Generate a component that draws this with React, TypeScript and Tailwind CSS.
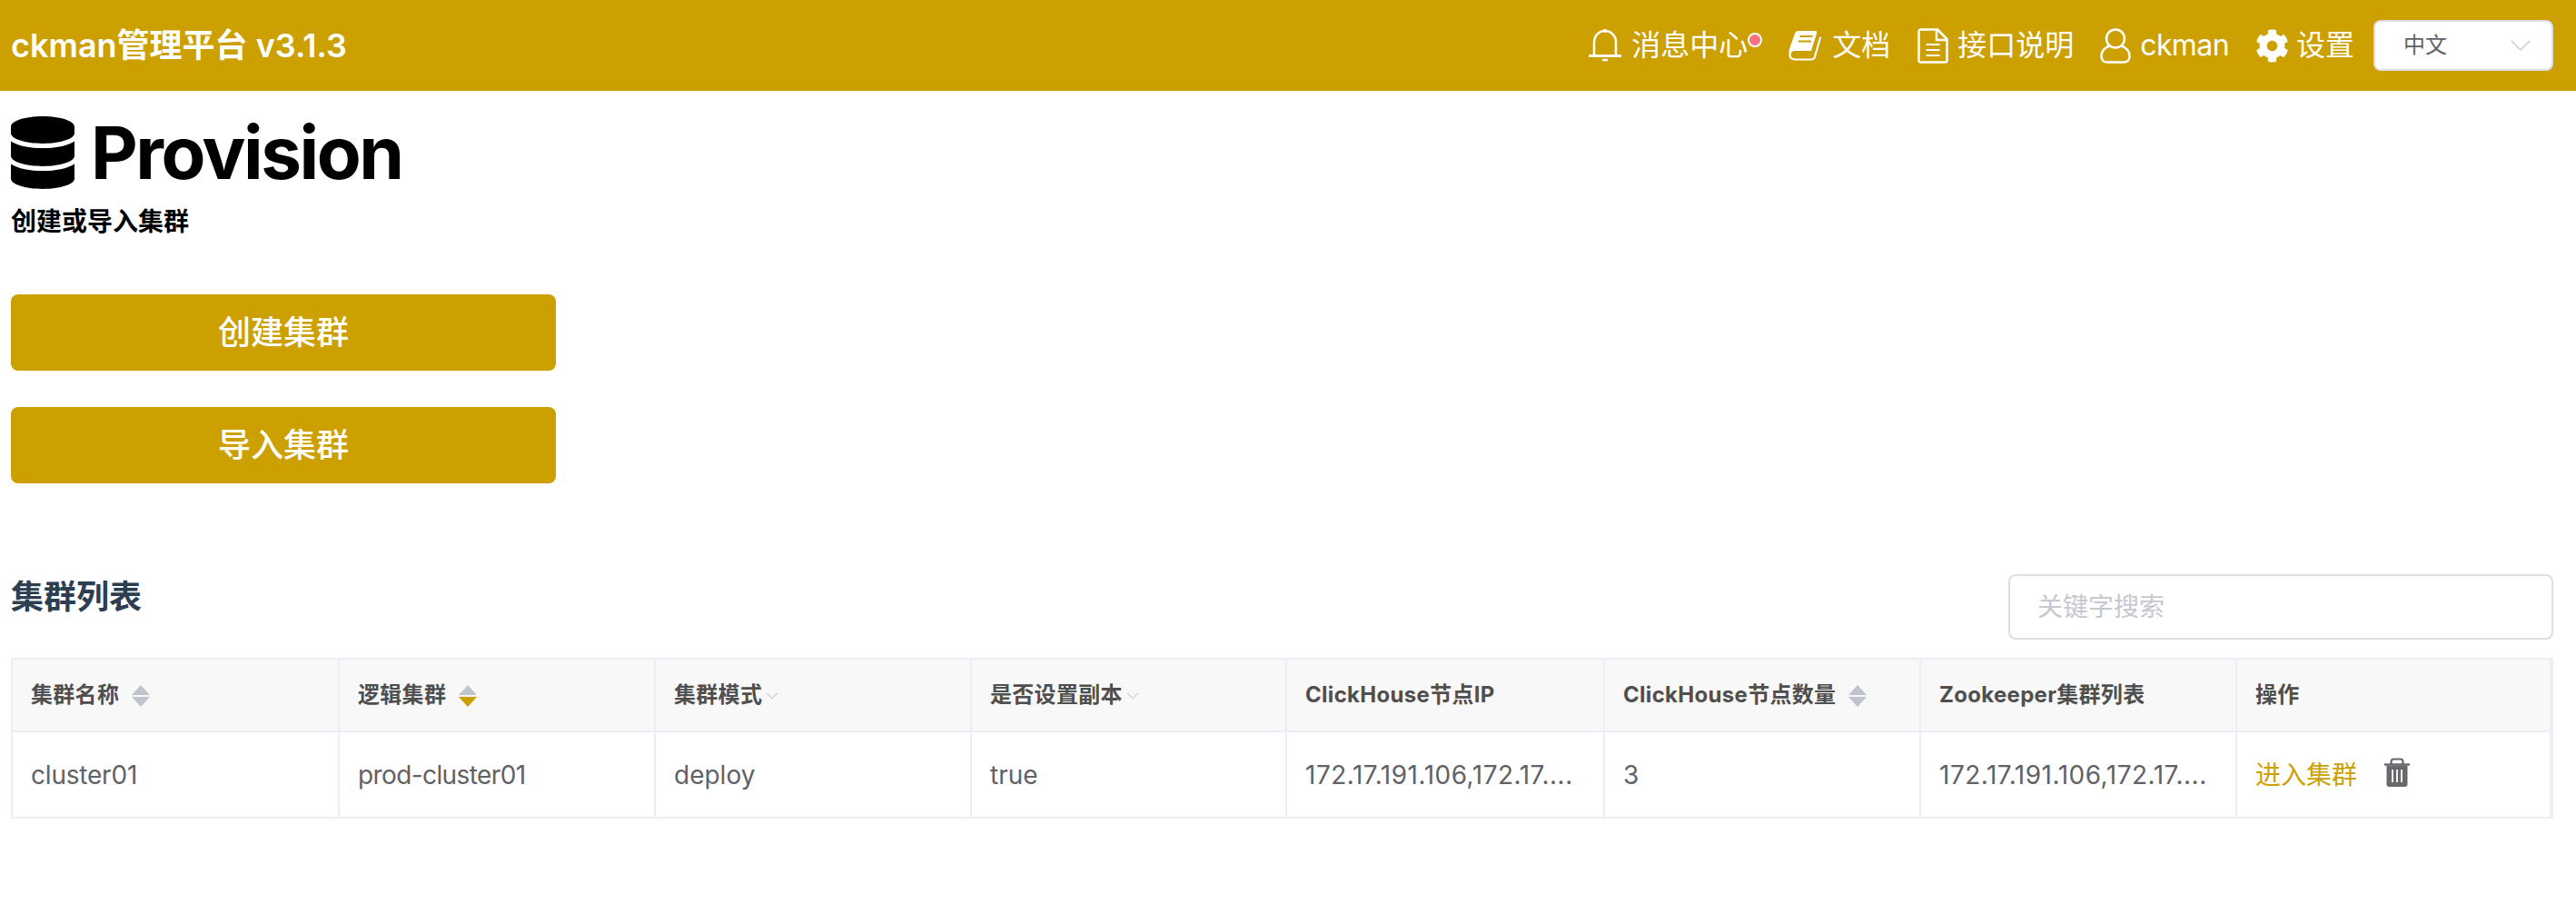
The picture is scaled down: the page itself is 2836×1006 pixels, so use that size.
import type { ReactNode } from 'react';
import { ChevronDown } from 'lucide-react';
import { FaCog, FaDatabase } from 'react-icons/fa';

const font = "font-['Inter','Noto_Sans_CJK_SC',sans-serif]";

const SortIcon = ({ active = false }: { active?: boolean }) => (
  <span className="inline-flex flex-col gap-[2px] ml-[14px] align-middle">
    <span className="w-0 h-0 border-x-[10px] border-x-transparent border-b-[11px] border-b-[#c0c4cc]" />
    <span className={`w-0 h-0 border-x-[10px] border-x-transparent border-t-[11px] ${active ? 'border-t-[#cca000]' : 'border-t-[#c0c4cc]'}`} />
  </span>
);

const FilterIcon = () => <ChevronDown className="inline-block w-[22px] h-[22px] text-[#a8acb4]" strokeWidth={1} />;

const BellIcon = () => (
  <svg viewBox="0 0 36 36" className="w-[36px] h-[36px]" fill="none" stroke="currentColor" strokeWidth="2.5">
    <path d="M6 29V14a12 12 0 0 1 24 0v15" />
    <path d="M1 29.5h34" strokeLinecap="round" strokeWidth="3" />
    <path d="M18 0.5v2" strokeWidth="3" strokeLinecap="round" />
    <path d="M16 34h4" strokeWidth="2.5" strokeLinecap="round" />
  </svg>
);

const BookIcon = () => (
  <svg viewBox="0 0 37 34" className="w-[37px] h-[34px]" fill="none">
    <path d="M10 1h19q3 0 2 3l-6 19H7q-3 0-5 3l-1 1q-1-3 0-6L7 4q1-3 3-3z" fill="currentColor" />
    <path d="M2 25q-2 7 5 7.500h18q3 0 4-3l6-21" stroke="currentColor" strokeWidth="2.200" strokeLinecap="round" />
    <path d="M12.500 7h14M11 12.500h14" stroke="#cca000" strokeWidth="2.200" />
  </svg>
);

const FileIcon = () => (
  <svg viewBox="0 0 34 39" className="w-[34px] h-[39px]" fill="none" stroke="currentColor" strokeWidth="2.500" strokeLinejoin="round">
    <path d="M4 1.500h18L32.500 12v23.500a2 2 0 0 1-2 2H4a2 2 0 0 1-2.500-2V3.500a2 2 0 0 1 2.500-2z" />
    <path d="M21 2v11h11" />
    <path d="M9.500 18h15M9.500 24h15M9.500 30h15" strokeWidth="2.200" />
  </svg>
);

const UserIcon = () => (
  <svg viewBox="0 0 34 39" className="w-[34px] h-[39px]" fill="none" stroke="currentColor" strokeWidth="2.500">
    <circle cx="17" cy="11.500" r="10" />
    <path d="M10.500 19.500C5 21.500 1.500 26 1.500 31c0 4 2.500 6.500 6.500 6.500h18c4 0 6.500-2.500 6.500-6.500 0-5-3.500-9.500-9-11.500" />
  </svg>
);

const TrashIcon = () => (
  <svg viewBox="0 0 28 32" className="w-[28px] h-[32px] text-[#67686c]" fill="none">
    <path d="M7.500 7V4.500A3 3 0 0 1 10.500 1.500h7a3 3 0 0 1 3 3V7" stroke="currentColor" strokeWidth="2.200" />
    <path d="M0 7.500h28" stroke="currentColor" strokeWidth="2.400" />
    <path d="M2.500 8.500h23V29a3 3 0 0 1-3 3h-17a3 3 0 0 1-3-3z" fill="currentColor" />
    <path d="M9 13v14M14 13v14M19 13v14" stroke="#fff" strokeWidth="1.800" />
  </svg>
);

const headers: { label: string; extra?: ReactNode }[] = [
  { label: '集群名称', extra: <SortIcon /> },
  { label: '逻辑集群', extra: <SortIcon active /> },
  { label: '集群模式', extra: <FilterIcon /> },
  { label: '是否设置副本', extra: <FilterIcon /> },
  { label: 'ClickHouse节点IP' },
  { label: 'ClickHouse节点数量', extra: <SortIcon /> },
  { label: 'Zookeeper集群列表' },
  { label: '操作' },
];

const cellClass = 'border-2 border-[#ebeef5] px-[20px] text-[#606266] whitespace-nowrap';
const ipText = '172.17.191.106,172.17....';

export default function App() {
  return (
    <div className={`${font} min-h-[1006px] bg-white`}>
      <header className="h-[100px] bg-[#cca000] flex items-center justify-between pl-[12px] pr-[25px] text-white">
        <div className="text-[36px] font-semibold">ckman管理平台 v3.1.3</div>
        <div className="flex items-center text-[32px]">
          <div className="flex items-center gap-[11px]">
            <BellIcon />
            <span>消息中心</span>
          </div>
          <span className="w-[16px] h-[16px] rounded-full bg-[#f9707f] border-2 border-white -mt-[13px]" />
          <div className="flex items-center gap-[11px] ml-[29px]">
            <BookIcon />
            <span>文档</span>
          </div>
          <div className="flex items-center gap-[10px] ml-[30px]">
            <FileIcon />
            <span>接口说明</span>
          </div>
          <div className="flex items-center gap-[10px] ml-[29px]">
            <UserIcon />
            <span className="tracking-[-0.6px]">ckman</span>
          </div>
          <div className="flex items-center gap-[8px] ml-[29px]">
            <FaCog className="w-[37px] h-[37px]" />
            <span>设置</span>
          </div>
          <div className="w-[198px] h-[56px] ml-[21px] rounded-[8px] bg-white border-2 border-[#dcdee2] flex items-center justify-between pl-[31px] pr-[14px] text-[24px] text-[#606266]">
            <span>中文</span>
            <ChevronDown className="w-[40px] h-[40px] text-[#c5c8ce]" strokeWidth={0.8} />
          </div>
        </div>
      </header>

      <main className="px-[12px]">
        <div className="flex items-center gap-[18px] pt-[28px] text-black">
          <FaDatabase className="w-[70px] h-[80px]" />
          <h1 className="text-[80px] leading-[80px] font-bold tracking-[-2.5px]">Provision</h1>
        </div>
        <p className="mt-[20px] text-[28px] leading-[32px] font-semibold text-black">创建或导入集群</p>

        <div className="mt-[64px] w-[600px] flex flex-col gap-[40px]">
          <button className="h-[84px] rounded-[8px] bg-[#cca000] text-white text-[36px] font-medium">创建集群</button>
          <button className="h-[84px] rounded-[8px] bg-[#cca000] text-white text-[36px] font-medium">导入集群</button>
        </div>

        <div className="mt-[100px] flex items-start justify-between pr-[13px]">
          <h2 className="mt-[1px] text-[36px] leading-[48px] font-semibold text-[#2c3e50]">集群列表</h2>
          <input
            placeholder="关键字搜索"
            className="w-[600px] h-[72px] rounded-[8px] border-2 border-[#dcdee2] px-[30px] text-[28px] placeholder:text-[#c5c8ce] outline-none"
          />
        </div>

        <table className="mt-[20px] w-[2799px] table-fixed border-collapse border-2 border-[#e8eaec] text-[28px]">
          <colgroup>
            <col className="w-[360px]" />
            <col className="w-[348px]" />
            <col className="w-[348px]" />
            <col className="w-[347px]" />
            <col className="w-[350px]" />
            <col className="w-[348px]" />
            <col className="w-[348px]" />
            <col />
          </colgroup>
          <thead>
            <tr className="h-[80px] bg-[#f8f8f9]">
              {headers.map((h) => (
                <th key={h.label} className="border-2 border-[#ebeef5] last:border-r-4 px-[20px] text-left text-[24px] tracking-[0.3px] font-bold text-[#4f4f4f] whitespace-nowrap">
                  {h.label}
                  {h.extra}
                </th>
              ))}
            </tr>
          </thead>
          <tbody>
            <tr className="h-[95px]">
              <td className={`${cellClass} tracking-[-0.2px]`}>cluster01</td>
              <td className={`${cellClass} tracking-[-0.6px]`}>prod-cluster01</td>
              <td className={cellClass}>deploy</td>
              <td className={cellClass}>true</td>
              <td className={`${cellClass} tracking-[0.5px]`}>{ipText}</td>
              <td className={cellClass}>3</td>
              <td className={`${cellClass} tracking-[0.5px]`}>{ipText}</td>
              <td className="border-2 border-r-4 border-[#ebeef5] px-[20px]">
                <div className="flex items-center gap-[30px]">
                  <span className="text-[#cca000]">进入集群</span>
                  <span className="-mt-[6px]"><TrashIcon /></span>
                </div>
              </td>
            </tr>
          </tbody>
        </table>
      </main>
    </div>
  );
}
